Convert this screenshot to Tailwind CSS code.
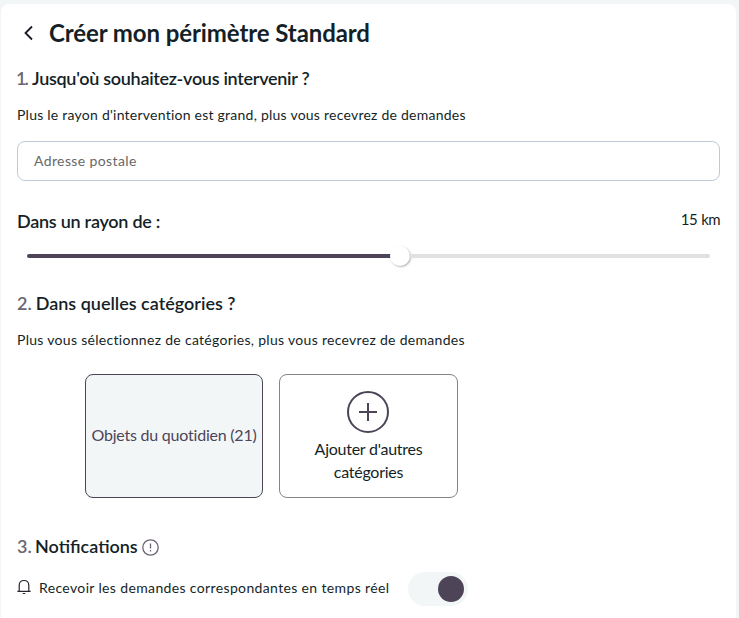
<!DOCTYPE html>
<html lang="fr">
<head>
<meta charset="utf-8">
<title>Créer mon périmètre Standard</title>
<script src="https://cdn.jsdelivr.net/npm/@tailwindcss/browser@4"></script>
</head>
<body class="h-[618px] overflow-hidden bg-[#f2f6f7] pt-1 pr-[3px] pl-px font-['Lato',sans-serif] text-[#151f27]">
<main class="h-[640px] rounded-lg bg-white pr-4 pl-4">
  <header class="flex h-[58px] items-center">
    <svg class="ml-1.5 h-4 w-4" viewBox="0 0 16 16" fill="none" stroke="#1d1826" stroke-width="1.8"><path d="M9 1.500 2.500 8 9 14.500"/></svg>
    <h1 class="ml-2.5 text-2xl font-bold whitespace-nowrap tracking-[-0.09px]">Créer mon périmètre Standard</h1>
  </header>
  <h2 class="flex h-8 items-center text-lg font-semibold whitespace-nowrap"><span class="-ml-px w-4 tracking-[-2px] text-[#6b6673]">1.</span><span class="tracking-[-0.29px]">Jusqu'où souhaitez-vous intervenir ?</span></h2>
  <p class="mt-[11px] flex h-5 items-center text-sm"><span class="whitespace-nowrap tracking-[0.24px]">Plus le rayon d'intervention est grand, plus vous recevrez de demandes</span></p>
  <div class="mt-4 flex h-10 items-center rounded-lg border border-[#bfcad8] px-4 text-sm text-[#686868]"><span class="tracking-[0.38px]">Adresse postale</span></div>
  <div class="mt-[26px] flex h-7 items-center justify-between">
    <h3 class="text-lg font-semibold whitespace-nowrap tracking-[-0.25px]">Dans un rayon de :</h3>
    <span class="pb-[3px] text-[15px] tracking-[-0.6px] word-spacing-normal [word-spacing:1px]">15 km</span>
  </div>
  <div class="mx-2.5 mt-2.5 flex h-[22px] items-center">
    <div class="h-1 w-[364px] rounded-l-full bg-[#4d4557]"></div>
    <div class="-ml-px h-5 w-5 shrink-0 rounded-full bg-white shadow-[1px_1px_2px_rgba(0,0,0,0.3)]"></div>
    <div class="-ml-px h-1 flex-1 rounded-r-full bg-[#e1e1e1]"></div>
  </div>
  <h2 class="mt-5 flex h-8 items-center gap-1 text-lg font-semibold whitespace-nowrap"><span class="text-[#6b6673]">2.</span><span>Dans quelles catégories ?</span></h2>
  <p class="mt-[11px] flex h-5 items-center text-sm"><span class="whitespace-nowrap tracking-[0.3px]">Plus vous sélectionnez de catégories, plus vous recevrez de demandes</span></p>
  <div class="mt-6 ml-[68px] flex h-[124px] gap-4">
    <div class="flex w-[178px] items-center justify-center rounded-lg border border-[#4d4557] bg-[#f2f6f7] pb-0.5 text-base text-[#4d4557]"><span class="whitespace-nowrap tracking-[-0.22px]">Objets du quotidien (21)</span></div>
    <div class="flex w-[179px] flex-col items-center rounded-lg border border-[#858585] pt-[15px] text-center text-base leading-[23px]">
      <svg class="mr-px mb-1 h-[43px] w-[43px] shrink-0" viewBox="0 0 43 43" fill="none" stroke="#4d4557" stroke-width="2"><circle cx="21" cy="22" r="20"/><path d="M21 13v18M12 22h18"/></svg>
      <span class="whitespace-nowrap tracking-[-0.25px]">Ajouter d'autres<br>catégories</span>
    </div>
  </div>
  <h2 class="mt-8 flex h-[34px] items-center text-lg font-semibold whitespace-nowrap"><span class="w-[18px] pb-0.5 text-[#6b6673]">3.</span><span class="pb-0.5">Notifications</span>
    <svg class="ml-1 h-[17px] w-[17px]" viewBox="0 0 17 17" fill="none" stroke="#6b6375" stroke-width="1.300"><circle cx="8.500" cy="8.500" r="7.700"/><path d="M8.500 4.500v5M8.500 11v1.400"/></svg>
  </h2>
  <div class="mt-2 flex h-[34px] items-center">
    <svg class="-mt-1 h-4 w-[14px]" viewBox="0 0 14 16" fill="none" stroke="#29232f" stroke-width="1.200"><path d="M.4 12.400h13.200M2.200 12.400V6.500C2.200 3.500 4.200 1.500 7 1.500s4.800 2 4.800 5v5.900M5.700 14.500h2.600"/></svg>
    <span class="ml-2 pb-0.5 text-sm whitespace-nowrap tracking-[0.36px]">Recevoir les demandes correspondantes en temps réel</span>
    <div class="ml-[19px] flex h-[34px] w-[60px] items-center justify-end rounded-full bg-[#f2f6f7] pr-1"><div class="h-[26px] w-[26px] rounded-full bg-[#4d4557]"></div></div>
  </div>
</main>
</body>
</html>
